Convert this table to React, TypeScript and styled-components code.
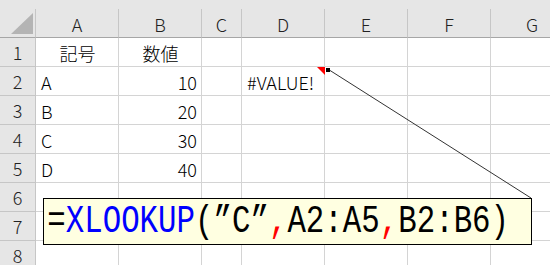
import styled, { createGlobalStyle } from "styled-components";

const GlobalStyle = createGlobalStyle`
  html, body {
    margin: 0;
    padding: 0;
    background: #ffffff;
    overflow: hidden;
  }
  body {
    font-family: "Noto Sans CJK JP", "Noto Sans", sans-serif;
  }
`;

const COLS = ["A", "B", "C", "D", "E", "F", "G"];
const WIDTHS = [83, 83, 40, 83, 83, 83, 83];

type Cell = { text: string; align?: "left" | "right" | "center" };

const DATA: Record<number, Record<string, Cell>> = {
  1: { A: { text: "記号", align: "center" }, B: { text: "数値", align: "center" } },
  2: { A: { text: "A" }, B: { text: "10", align: "right" }, D: { text: "#VALUE!" } },
  3: { A: { text: "B" }, B: { text: "20", align: "right" } },
  4: { A: { text: "C" }, B: { text: "30", align: "right" } },
  5: { A: { text: "D" }, B: { text: "40", align: "right" } },
};

export default function App() {
  const template = `36px ${WIDTHS.map((w) => `${w}px`).join(" ")}`;
  return (
    <>
      <GlobalStyle />
      <Sheet>
        <TopStrip />
        <Grid style={{ gridTemplateColumns: template }}>
          <Corner>
            <CornerTriangle />
          </Corner>
          {COLS.map((c) => (
            <ColHead key={c}>{c}</ColHead>
          ))}
          {[1, 2, 3, 4, 5, 6, 7, 8].map((r) => (
            <Row key={r} r={r} />
          ))}
        </Grid>

        <Connector width="550" height="265" viewBox="0 0 550 265">
          <line x1="328.5" y1="69.5" x2="531" y2="198" stroke="#333" strokeWidth="1" />
          <rect x="326" y="68" width="4" height="4" fill="#000" />
        </Connector>

        <Callout>
          <Formula>
            <span>=</span>
            <Fn>XLOOKUP</Fn>
            <span>(”C”</span>
            <Comma>,</Comma>
            <span>A2:A5</span>
            <Comma>,</Comma>
            <span>B2:B6)</span>
          </Formula>
        </Callout>
      </Sheet>
    </>
  );
}

function Row({ r }: { r: number }) {
  const cells = DATA[r] ?? {};
  return (
    <>
      <RowHead>{r}</RowHead>
      {COLS.map((c) => {
        const cell = cells[c];
        return (
          <GridCell key={c} $align={cell?.align ?? "left"}>
            {cell?.text}
            {r === 2 && c === "D" && <CommentMark />}
          </GridCell>
        );
      })}
    </>
  );
}

const Sheet = styled.div`
  position: relative;
  width: 550px;
  height: 265px;
  overflow: hidden;
  background: #ffffff;
`;

const TopStrip = styled.div`
  height: 9px;
  background: #e6e6e6;
`;

const Grid = styled.div`
  display: grid;
  grid-auto-rows: 29px;
  grid-template-rows: 29px;
`;

const Corner = styled.div`
  position: relative;
  background: #e6e6e6;
  border-right: 1px solid #c6c6c6;
  border-bottom: 1px solid #a6a6a6;
`;

const CornerTriangle = styled.div`
  position: absolute;
  left: 11px;
  top: 4px;
  width: 0;
  height: 0;
  border-left: 22px solid transparent;
  border-bottom: 21px solid #b4b4b4;
`;

const ColHead = styled.div`
  display: flex;
  align-items: center;
  justify-content: center;
  background: #e6e6e6;
  border-right: 1px solid #c6c6c6;
  border-bottom: 1px solid #a6a6a6;
  font-size: 18px;
  font-weight: 300;
  color: #222;
  padding-top: 1px;
`;

const RowHead = styled.div`
  display: flex;
  align-items: center;
  justify-content: center;
  background: #e6e6e6;
  border-right: 1px solid #c6c6c6;
  border-bottom: 1px solid #c6c6c6;
  font-size: 18px;
  font-weight: 300;
  color: #222;
`;

const GridCell = styled.div<{ $align: "left" | "right" | "center" }>`
  position: relative;
  display: flex;
  align-items: center;
  justify-content: ${({ $align }) =>
    $align === "right" ? "flex-end" : $align === "center" ? "center" : "flex-start"};
  padding: 1px 4px 0 5px;
  border-right: 1px solid #d4d4d4;
  border-bottom: 1px solid #d4d4d4;
  font-size: 18px;
  font-weight: 300;
  color: #000;
  white-space: nowrap;
`;

const CommentMark = styled.div`
  position: absolute;
  top: 0;
  right: -1px;
  width: 0;
  height: 0;
  border-left: 8px solid transparent;
  border-top: 8px solid #ff0000;
`;

const Connector = styled.svg`
  position: absolute;
  left: 0;
  top: 0;
  pointer-events: none;
`;

const Callout = styled.div`
  position: absolute;
  left: 43px;
  top: 198px;
  width: 487px;
  height: 45px;
  background: #ffffe1;
  border: 1px solid #000;
  display: flex;
  align-items: center;
  overflow: hidden;
`;

const Formula = styled.div`
  display: inline-block;
  padding-left: 4px;
  font-family: "Liberation Mono", "DejaVu Sans Mono", monospace;
  font-size: 38px;
  line-height: 1;
  color: #000;
  white-space: nowrap;
  transform: scaleX(0.81);
  transform-origin: left center;
`;

const Fn = styled.span`
  color: #0000ff;
`;

const Comma = styled.span`
  color: #ff0000;
`;
